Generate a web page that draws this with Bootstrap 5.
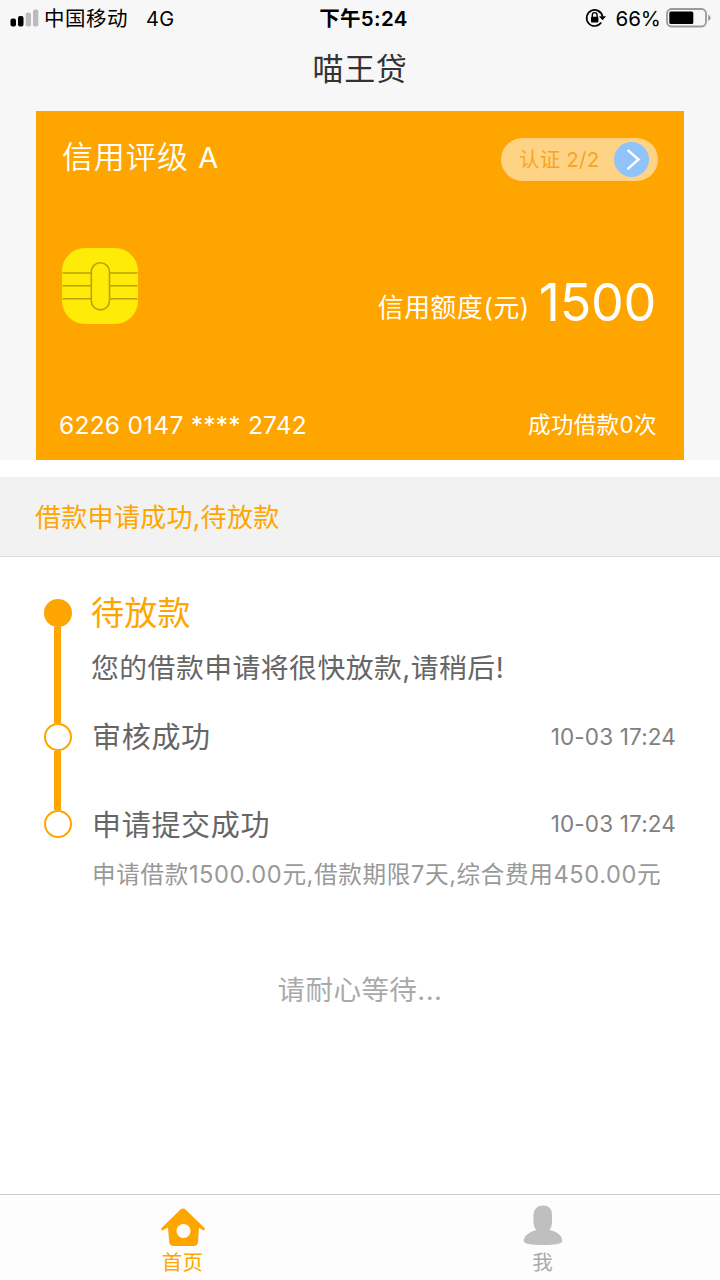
<!DOCTYPE html>
<html lang="zh-CN">
<head>
<meta charset="utf-8">
<meta name="viewport" content="width=device-width, initial-scale=1">
<title>喵王贷</title>
<link href="https://cdn.jsdelivr.net/npm/bootstrap@5.3.0/dist/css/bootstrap.min.css" rel="stylesheet">
<style>
  :root { --brand: #ffa500; }
  body { font-family: Inter, "Noto Sans CJK SC", sans-serif; background: #fff; color: #666; line-height: 1; overflow: hidden; }
  svg { display: block; flex: none; }
  .screen { height: 1280px; width: 720px; }
  .top-area { height: 460px; background: #f7f7f7; }
  .statusbar { height: 36px; padding: 0 9px 0 10px; color: #000; font-size: 20.5px; }
  .statusbar span, .clock { padding-top: 2px; }
  .status-side { width: 300px; }
  .carrier { margin-left: 5px; letter-spacing: .5px; }
  .network { margin-left: 18px; font-size: 20px; letter-spacing: .3px; }
  .clock { font-weight: 600; font-size: 20.5px; letter-spacing: .35px; margin-left: 6px; }
  .app-title { height: 64px; margin-bottom: 11px; padding-top: 1px; color: #333; font-size: 31px; letter-spacing: .6px; }
  .credit-card { height: 349px; margin: 0 36px; padding: 27px 26px 23px 26px; background: var(--brand); color: #fff; }
  .rating { font-size: 31px; letter-spacing: .7px; line-height: 37px; font-weight: 350; }
  .rating-grade { font-size: 29px; font-weight: 400; }
  .verify { width: 157px; height: 43px; padding: 0 9px 0 18px; background: #ffd386; color: #f5a623; font-size: 20.5px; letter-spacing: .2px; }
  .verify span { padding-top: 2px; }
  .limit-row { height: 76px; margin-bottom: 22px; }
  .limit { margin: 29px 2px 0 0; }
  .limit-label { font-size: 25.8px; letter-spacing: .6px; padding-top: 11px; }
  .limit-value { font-size: 52px; letter-spacing: -.3px; margin-left: 9px; font-weight: 380; }
  .card-number { font-size: 24.5px; letter-spacing: .25px; margin-left: -3px; }
  .loan-count { font-size: 22.5px; letter-spacing: .4px; margin-right: 1px; }
  .notice { height: 80px; margin-top: 17px; padding: 3px 35px 0; background: #f2f2f2; border-bottom: 1.5px solid #ddd; color: var(--brand); font-size: 26px; letter-spacing: .3px; }
  .steps { padding: 42px 44px 0 43px; }
  .rail { width: 29px; margin-right: 19px; }
  .dot { width: 28px; height: 28px; border: 2.5px solid var(--brand); flex: none; }
  .dot-on { background: var(--brand); }
  .bar { width: 7px; background: var(--brand); }
  .step-1 { height: 123.5px; }
  .step-2 { height: 87.5px; }
  .step-3 { height: 90px; }
  .step-head { height: 28px; }
  .step-name { font-size: 29px; letter-spacing: .7px; padding: 2px 0 0 1px; }
  .step-current { font-size: 33px; letter-spacing: .3px; color: var(--brand); }
  .step-msg { font-size: 27.8px; letter-spacing: .5px; line-height: 40px; margin-top: 21px; }
  .step-time { font-size: 22.5px; color: #808080; letter-spacing: .15px; padding-top: 1px; }
  .step-note { font-size: 23.6px; color: #999; letter-spacing: .63px; line-height: 36px; margin-top: 19px; padding-left: 1px; }
  .waiting { margin-top: 60px; line-height: 61px; font-size: 27.5px; letter-spacing: .45px; color: #aaa; }
  .tabs { height: 86px; border-top: 1px solid #ccc; font-size: 20.5px; letter-spacing: .2px; background: #fdfdfd; }
  .tab-item { color: #aaa; padding: 10px 0 0 5px; }
  .tab-item.current { color: var(--brand); }
  .tab-label { line-height: 24px; margin-top: 4px; }
</style>
</head>
<body>
<div class="screen d-flex flex-column text-nowrap">
  <header class="top-area">
    <div class="statusbar d-flex align-items-center justify-content-between">
      <div class="status-side d-flex align-items-center">
        <svg width="29" height="18" viewBox="0 0 29 18"><rect x="0.5" y="9.5" width="5.5" height="8" rx="2"/><rect x="8" y="7" width="5.5" height="10.5" rx="2"/><g fill="#bbb"><rect x="15.7" y="3.5" width="5.3" height="14" rx="2"/><rect x="23" y="0.5" width="5.3" height="17" rx="2"/></g></svg>
        <span class="carrier">中国移动</span><span class="network">4G</span>
      </div>
      <div class="clock">下午5:24</div>
      <div class="status-side d-flex align-items-center justify-content-end">
        <svg width="22" height="20" viewBox="0 0 22 20"><path d="M16.200 14.600A8 8 0 1 1 17.500 8.500" fill="none" stroke="#000" stroke-width="1.7"/><path d="M14 8.300h7l-3.500 4z"/><rect x="6" y="8.700" width="7.400" height="5.800" rx=".8"/><path d="M7.300 9V7a2.400 2.400 0 0 1 4.800 0v2" fill="none" stroke="#000" stroke-width="1.400"/></svg>
        <span class="ms-2">66%</span>
        <svg class="ms-1" width="46" height="20" viewBox="0 0 46 20"><rect x="2" y="1" width="39" height="17.500" rx="4.500" fill="none" stroke="#999" stroke-width="1.800"/><rect x="4.300" y="3.500" width="24" height="12.500" rx="1.500"/><path d="M43.200 6.500q5 3.300 0 6.600z" fill="#999"/></svg>
      </div>
    </div>
    <h1 class="app-title d-flex align-items-center justify-content-center fw-normal">喵王贷</h1>
    <section class="credit-card d-flex flex-column justify-content-between">
      <div class="d-flex justify-content-between align-items-start">
        <div class="rating">信用评级 <span class="rating-grade">A</span></div>
        <div class="verify rounded-pill d-flex align-items-center justify-content-between">
          <span>认证 2/2</span>
          <svg width="35" height="35" viewBox="0 0 35 35"><circle cx="17.5" cy="17.5" r="17.5" fill="#8fc3fa"/><path d="M13.500 7.800 24.500 17.500 13.500 27.200" fill="none" stroke="#fff" stroke-width="2.400"/></svg>
        </div>
      </div>
      <div class="limit-row d-flex justify-content-between align-items-start">
        <svg width="76" height="76" viewBox="0 0 76 76"><rect width="76" height="76" rx="23" fill="#ffeb08"/><g fill="none" stroke="#b8a30c" stroke-width="1.6"><path d="M.5 25H29M47.500 25H75.500M.5 37.700H29M47.500 37.700H75.500M.5 50.700H29M47.500 50.700H75.500"/><rect x="29.300" y="14.700" width="18.200" height="47.200" rx="9.100"/></g></svg>
        <div class="limit d-flex align-items-center"><span class="limit-label">信用额度(元)</span><span class="limit-value">1500</span></div>
      </div>
      <div class="d-flex justify-content-between align-items-center">
        <span class="card-number">6226 0147 **** 2742</span><span class="loan-count">成功借款0次</span>
      </div>
    </section>
  </header>
  <div class="notice d-flex align-items-center">借款申请成功,待放款</div>
  <main class="flex-grow-1">
    <ol class="steps list-unstyled m-0">
      <li class="step-1 d-flex">
        <div class="rail d-flex flex-column align-items-center"><span class="dot dot-on rounded-circle"></span><span class="bar flex-grow-1"></span></div>
        <div><div class="step-head step-current d-flex align-items-center">待放款</div><div class="step-msg">您的借款申请将很快放款,请稍后!</div></div>
      </li>
      <li class="step-2 d-flex">
        <div class="rail d-flex flex-column align-items-center"><span class="dot rounded-circle"></span><span class="bar flex-grow-1"></span></div>
        <div class="step-head flex-grow-1 d-flex align-items-center justify-content-between"><span class="step-name">审核成功</span><span class="step-time">10-03 17:24</span></div>
      </li>
      <li class="step-3 d-flex">
        <div class="rail d-flex flex-column align-items-center"><span class="dot rounded-circle"></span></div>
        <div class="flex-grow-1">
          <div class="step-head d-flex align-items-center justify-content-between"><span class="step-name">申请提交成功</span><span class="step-time">10-03 17:24</span></div>
          <div class="step-note">申请借款1500.00元,借款期限7天,综合费用450.00元</div>
        </div>
      </li>
    </ol>
    <div class="waiting text-center">请耐心等待...</div>
  </main>
  <nav class="tabs row g-0">
    <a class="tab-item current col-6 d-flex flex-column align-items-center text-decoration-none">
      <svg width="46" height="42" viewBox="0 0 46 42"><path fill="#ffa500" fill-rule="evenodd" d="M20.500 4.500Q23 2.500 25.500 4.500L45 23.500 43.800 25.700 39 22.500 38 37Q37.700 41 33.500 41H14Q9.500 41 9.200 37L8 22.500 2.200 25.700 1 23.500ZM23.500 19a7 7 0 1 0 .01 0Z"/></svg>
      <span class="tab-label">首页</span>
    </a>
    <a class="tab-item col-6 d-flex flex-column align-items-center text-decoration-none">
      <svg width="40" height="42" viewBox="0 0 40 42"><path fill="#bfbfbf" d="M10.500 10Q11 .5 20 .5T29 10V17Q29 22 26.500 25C35 27 39.300 31 39.300 36Q39 40 20 40T.7 36C.7 31 6 27 13.500 25Q10.500 22 10.500 17Z"/></svg>
      <span class="tab-label">我</span>
    </a>
  </nav>
</div>
<script src="https://cdn.jsdelivr.net/npm/bootstrap@5.3.0/dist/js/bootstrap.bundle.min.js"></script>
</body>
</html>
